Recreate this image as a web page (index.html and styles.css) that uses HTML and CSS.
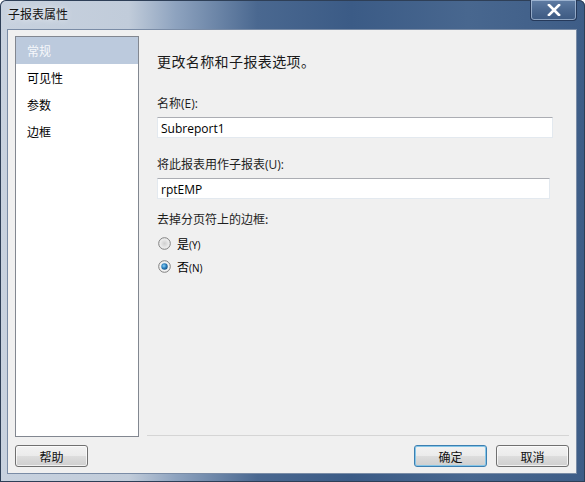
FILE: index.html
```html
<!DOCTYPE html>
<html lang="zh-CN">
<head>
<meta charset="utf-8">
<title>子报表属性</title>
<link rel="stylesheet" href="styles.css">
</head>
<body>
<div class="window">
  <div class="titlebar">
    <span class="title">子报表属性</span>
    <div class="close">
      <svg width="14" height="12" viewBox="0 0 14 12"><path d="M2 1 L12 11 M12 1 L2 11" stroke="#ffffff" stroke-width="2.6" stroke-linecap="square"/></svg>
    </div>
  </div>
  <div class="client">
    <div class="main">
      <ul class="nav">
        <li class="nav-item selected">常规</li>
        <li class="nav-item">可见性</li>
        <li class="nav-item">参数</li>
        <li class="nav-item">边框</li>
      </ul>
      <div class="pane">
        <h1 class="heading">更改名称和子报表选项。</h1>
        <div class="label label-first">名称<span class="latin">(E):</span></div>
        <div class="input input-wide"><span class="latin">Subreport1</span></div>
        <div class="label label-second">将此报表用作子报表<span class="latin">(U):</span></div>
        <div class="input input-narrow"><span class="latin">rptEMP</span></div>
        <div class="label label-third">去掉分页符上的边框:</div>
        <div class="radio radio-first">
          <svg width="13" height="13" viewBox="0 0 13 13"><defs><radialGradient id="rg1" cx="0.5" cy="0.5" r="0.5"><stop offset="0" stop-color="#cfcfcf"/><stop offset="1" stop-color="#f4f4f4"/></radialGradient></defs><circle cx="6.5" cy="6.5" r="5.8" fill="url(#rg1)" stroke="#7f7f7f" stroke-width="1"/></svg>
          <span>是<span class="latin small">(Y)</span></span>
        </div>
        <div class="radio radio-second">
          <svg width="13" height="13" viewBox="0 0 13 13"><defs><radialGradient id="rg2" cx="0.4" cy="0.4" r="0.6"><stop offset="0" stop-color="#8fd3f5"/><stop offset="0.6" stop-color="#2a7fbf"/><stop offset="1" stop-color="#1c5a8c"/></radialGradient></defs><circle cx="6.5" cy="6.5" r="5.8" fill="#f2f2f2" stroke="#7f7f7f" stroke-width="1"/><circle cx="6.5" cy="6.5" r="3.2" fill="url(#rg2)"/></svg>
          <span>否<span class="latin small">(N)</span></span>
        </div>
      </div>
    </div>
    <div class="buttons">
      <button class="btn">帮助</button>
      <div class="spacer"></div>
      <button class="btn btn-default">确定</button>
      <button class="btn">取消</button>
    </div>
  </div>
</div>
</body>
</html>
```

FILE: styles.css
```css
html, body {
  margin: 0;
  padding: 0;
}
body {
  width: 585px;
  height: 482px;
  overflow: hidden;
  font-family: "Noto Sans CJK SC", "Noto Sans", sans-serif;
  font-size: 12px;
  color: #000;
}
.window {
  width: 585px;
  height: 482px;
  box-sizing: border-box;
  display: flex;
  flex-direction: column;
  padding: 0 8px 8px 7px;
  background: linear-gradient(90deg, #c8d2df 0, #c1ccda 22%, #8ea3bf 30%, #4a6890 44%, #3b5b86 60%, #48678f 80%, #3e5d87 100%);
  box-shadow: inset 0 0 0 1px #2e3f57;
  border-radius: 6px 6px 0 0;
}
.titlebar {
  height: 29px;
  display: flex;
  align-items: flex-start;
  justify-content: space-between;
}
.title {
  margin-top: 6px;
  margin-left: 1px;
  font-size: 12px;
  line-height: 16px;
  color: #111;
  text-shadow: 0 0 6px rgba(255,255,255,0.9);
}
.close {
  width: 45px;
  height: 20px;
  border: 1px solid #25395a;
  border-top: none;
  border-radius: 0 0 4px 4px;
  box-shadow: inset 0 0 0 1px rgba(210,225,245,0.55);
  background: linear-gradient(180deg, #5f7ca3 0, #4b6890 50%, #3d5a82 100%);
  display: flex;
  align-items: center;
  justify-content: center;
}
.client {
  flex: 1;
  background: #f0f0f0;
  border: 1px solid #7a8ca6;
  display: flex;
  flex-direction: column;
  padding: 6px 7px 6px 7px;
}
.main {
  display: flex;
  height: 401px;
}
.nav {
  list-style: none;
  margin: 0;
  padding: 0;
  width: 122px;
  background: #fff;
  border: 1px solid #828790;
}
.nav-item {
  height: 27px;
  line-height: 27px;
  padding-left: 11px;
}
.nav-item.selected {
  background: #bccadd;
  color: #f6f8fb;
}
.pane {
  flex: 1;
  margin-left: 8px;
  border-bottom: 1px solid #d5d5d5;
  margin-bottom: 1px;
  padding: 15px 0 0 10px;
  display: flex;
  flex-direction: column;
  align-items: flex-start;
}
.heading {
  margin: 0;
  font-size: 14px;
  font-weight: normal;
  line-height: 20px;
  letter-spacing: 0.4px;
  color: #1a1a1a;
}
.latin {
  font-family: "Open Sans", "Noto Sans", sans-serif;
}
.small {
  font-size: 10px;
}
.label {
  line-height: 16px;
  height: 16px;
  color: #1e1e1e;
}
.label-first { margin-top: 24px; }
.label-second { margin-top: 18px; }
.label-third { margin-top: 12px; }
.input {
  box-sizing: border-box;
  height: 21px;
  margin-top: 6px;
  background: #fff;
  border: 1px solid #e3e9ef;
  border-top-color: #abadb3;
  padding-left: 3px;
  line-height: 19px;
  font-size: 12px;
}
.input-wide { width: 396px; }
.input-narrow { width: 393px; }
.radio {
  display: flex;
  align-items: center;
  height: 16px;
  gap: 6px;
  padding-left: 1px;
}
.radio-first { margin-top: 8px; }
.radio-second { margin-top: 7px; }
.buttons {
  display: flex;
  margin-top: 8px;
  gap: 9px;
}
.spacer { flex: 1; }
.btn {
  width: 73px;
  height: 22px;
  box-sizing: border-box;
  font-family: "Noto Sans CJK SC", sans-serif;
  font-size: 12px;
  color: #111;
  border: 1px solid #707070;
  border-radius: 3px;
  background: linear-gradient(180deg, #f2f2f2 0, #ebebeb 49%, #dddddd 50%, #cfcfcf 100%);
  box-shadow: inset 0 0 0 1px rgba(255,255,255,0.7);
  padding: 0;
}
.btn-default {
  border-color: #3c7fb1;
  box-shadow: inset 0 0 0 1px #86c6e8;
}
```
